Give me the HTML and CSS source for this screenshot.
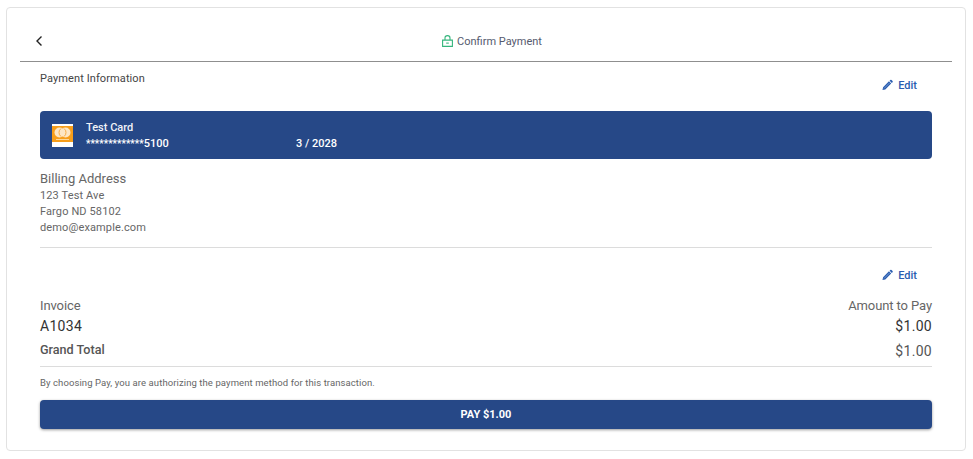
FILE: index.html
```html
<!DOCTYPE html>
<html lang="en">
<head>
    <meta charset="UTF-8">
    <meta name="viewport" content="width=device-width, initial-scale=1.0">
    <title>Confirm Payment</title>
    <link rel="stylesheet" href="styles.css">
</head>
<body>

<div class="card">
    <div class="header">
        <button class="back" aria-label="Back">
            <svg width="24" height="24" viewBox="0 0 24 24"><path d="M14.500 7.500 10 12l4.500 4.500" fill="none" stroke="#222" stroke-width="1.400"/></svg>
        </button>
        <div class="title">
            <svg width="11" height="12" viewBox="0 0 11 12"><path d="M0.600 5.100h9.800v6.300H0.600zM3 5.100V2.900a2.500 2.300 0 0 1 5 0v2.200" fill="none" stroke="#35b57c" stroke-width="1.100"/><path d="M4.200 8.100h2.600" stroke="#35b57c" stroke-width="1.100"/></svg>
            <span>Confirm Payment</span>
        </div>
    </div>

    <div class="content">
        <div class="section-top">
            <p class="section-label">Payment Information</p>
            <a class="edit" href="#">
                <svg width="11" height="12" viewBox="0 0 12 12"><path d="M0.500 11.500 1.200 8.400 7.600 2 10 4.400 3.600 10.800zM8.300 1.300 9.100 0.500a1 1 0 0 1 1.300 0L11.500 1.600a1 1 0 0 1 0 1.300L10.700 3.700z" fill="#2a5db0"/><path d="M2.300 9.700 8.300 3.700" stroke="#9db8e2" stroke-width="0.700"/></svg>
                Edit
            </a>
        </div>

        <div class="pay-card">
            <svg class="card-logo" width="21" height="23" viewBox="0 0 21 23">
                <rect width="21" height="23" fill="#fff"/>
                <rect y="2" width="21" height="16" fill="#f79e1b"/>
                <circle cx="7.500" cy="8.500" r="5" fill="#fde6c4"/>
                <circle cx="13.500" cy="8.500" r="5" fill="#fde6c4"/>
                <path d="M9 4.500a5 5 0 0 0 0 8M12 4.500a5 5 0 0 1 0 8" fill="none" stroke="#f9ad45" stroke-width="1"/>
                <rect x="4" y="15" width="13" height="1" fill="#fcd79a"/>
            </svg>
            <div class="card-info">
                <div class="card-name">Test Card</div>
                <div class="card-row">
                    <span class="card-number"><span class="card-mask">*************</span>5100</span>
                    <span class="card-expiry">3 / 2028</span>
                </div>
            </div>
        </div>

        <div class="billing">
            <p class="billing-title">Billing Address</p>
            <p>123 Test Ave</p>
            <p>Fargo ND 58102</p>
            <p>demo@example.com</p>
        </div>

        <hr class="rule">

        <div class="edit-row">
            <a class="edit" href="#">
                <svg width="11" height="12" viewBox="0 0 12 12"><path d="M0.500 11.500 1.200 8.400 7.600 2 10 4.400 3.600 10.800zM8.300 1.300 9.100 0.500a1 1 0 0 1 1.300 0L11.500 1.600a1 1 0 0 1 0 1.300L10.700 3.700z" fill="#2a5db0"/><path d="M2.300 9.700 8.300 3.700" stroke="#9db8e2" stroke-width="0.700"/></svg>
                Edit
            </a>
        </div>

        <div class="line line-head">
            <span>Invoice</span>
            <span>Amount to Pay</span>
        </div>
        <div class="line line-item">
            <span>A1034</span>
            <span>$1.00</span>
        </div>
        <div class="line line-total">
            <strong>Grand Total</strong>
            <span>$1.00</span>
        </div>

        <hr class="rule">

        <p class="terms">By choosing Pay, you are authorizing the payment method for this transaction.</p>

        <button class="pay">PAY $1.00</button>
    </div>
</div>

</body>
</html>
```

FILE: styles.css
```css
* {
    margin: 0;
    padding: 0;
    box-sizing: border-box;
}

body {
    font-family: 'Roboto', sans-serif;
    background-color: #fff;
    padding: 7px 7px 8px 6px;
    color: #666;
}

.card {
    background: #fff;
    border: 1px solid #e2e2e2;
    border-radius: 4px;
    height: 444px;
    padding: 0 13px;
}

.header {
    display: flex;
    align-items: center;
    justify-content: center;
    position: relative;
    height: 54px;
    padding-top: 13px;
    border-bottom: 1px solid #8f8f8f;
}

.back {
    position: absolute;
    left: 7px;
    top: 21px;
    width: 24px;
    height: 24px;
    background: none;
    border: none;
}

.title {
    display: flex;
    align-items: center;
    gap: 4px;
    padding-left: 12px;
    font-size: 11px;
    color: #555a6e;
}

.content {
    padding: 0 20px;
}

.section-top {
    display: flex;
    justify-content: space-between;
    height: 49px;
}

.section-label {
    font-size: 11px;
    letter-spacing: 0.1px;
    color: #444;
    margin-top: 10px;
}

.edit {
    display: flex;
    align-items: center;
    gap: 5px;
    height: 16px;
    margin-top: 15px;
    margin-right: 15px;
    font-size: 11px;
    font-weight: 500;
    color: #2a5db0;
    text-decoration: none;
}

.pay-card {
    display: flex;
    align-items: center;
    gap: 13px;
    height: 48px;
    padding-left: 12px;
    background: #264887;
    border-radius: 4px;
    color: #fff;
}

.card-logo {
    flex-shrink: 0;
}

.card-name {
    font-size: 11px;
    font-weight: 500;
    color: #f1f3f8;
    margin-bottom: 3px;
}

.card-row {
    display: flex;
    font-size: 11px;
    font-weight: 500;
}

.card-number {
    width: 210px;
}

.card-mask {
    font-size: 10px;
}

.billing {
    margin-top: 12px;
    font-size: 11px;
    line-height: 16px;
    letter-spacing: 0.12px;
    height: 76px;
}

.billing-title {
    font-size: 13px;
    letter-spacing: 0;
    margin-bottom: 1px;
}

.rule {
    border: none;
    border-top: 1px solid #dcdcdc;
}

.edit-row {
    display: flex;
    justify-content: flex-end;
    height: 47px;
}

.edit-row .edit {
    margin-top: 19px;
}

.line {
    display: flex;
    justify-content: space-between;
    align-items: center;
}

.line-head {
    height: 21px;
    font-size: 13px;
    letter-spacing: -0.1px;
}

.line-item {
    height: 20px;
    font-size: 14px;
    letter-spacing: 0.3px;
    color: #333;
}

.line-total {
    height: 30px;
    padding-bottom: 1px;
    font-size: 14px;
    letter-spacing: 0.3px;
    color: #555;
}

.line-total strong {
    font-size: 12.6px;
    font-weight: 500;
    letter-spacing: 0;
    margin-bottom: 2px;
}

.terms {
    margin-top: 10px;
    font-size: 9.5px;
    letter-spacing: 0.09px;
    color: #666;
}

.pay {
    display: block;
    width: 100%;
    height: 29px;
    margin-top: 12px;
    background: #264887;
    color: #fff;
    border: none;
    border-radius: 4px;
    font-family: inherit;
    font-size: 11px;
    font-weight: 700;
    box-shadow: 0 1px 3px rgba(0, 0, 0, 0.4);
}
```
